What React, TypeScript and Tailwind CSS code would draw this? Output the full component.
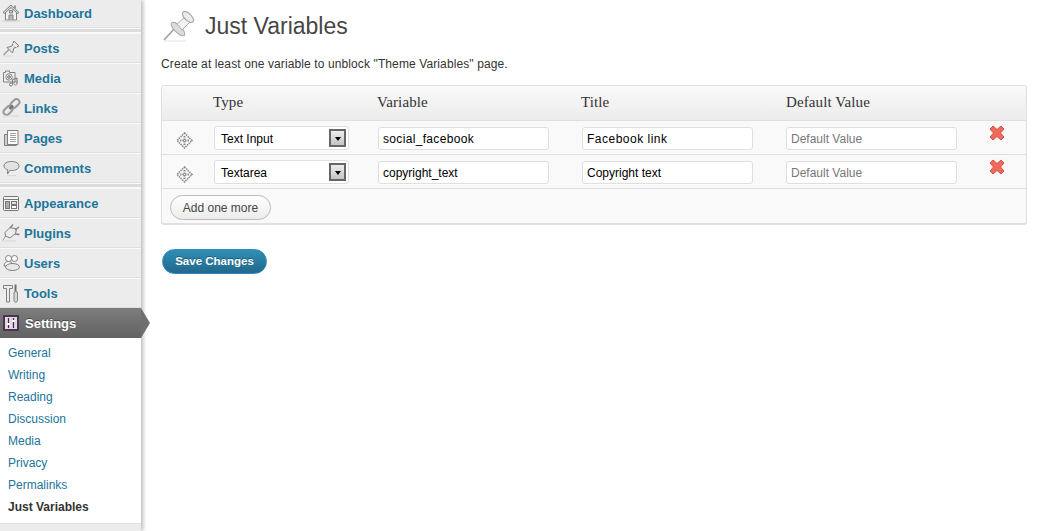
import type { ReactNode } from "react";

const sans = "font-['Liberation_Sans',Arial,sans-serif]";
const serif = "font-['Liberation_Serif',Georgia,serif]";

const Stroke = ({ children }: { children: ReactNode }) => (
  <svg width="20" height="20" viewBox="0 0 20 20" fill="#f4f4f4" stroke="#808080" strokeWidth="1" className="shrink-0">
    {children}
  </svg>
);

const icons: Record<string, ReactNode> = {
  Dashboard: (
    <Stroke>
      <path d="M1 9.500 9 2l8 7.500-1.500 1L9 4.500 2.500 10.500z" fill="#d8d8d8" />
      <path d="M3.500 10v7h11v-7" />
      <path d="M7 17v-5h4v5" fill="#bbb" />
      <path d="M7.500 7.500h3V10h-3z" fill="#ccc" />
      <path d="M13 2.500v3" strokeWidth="1.500" />
      <path d="M0 18h18" stroke="#d0d0d0" />
    </Stroke>
  ),
  Posts: (
    <Stroke>
      <path d="M1.500 17 7 11.500" stroke="#999" strokeWidth="1.200" />
      <path d="M5 9.500l5-1.500 2-5 5 5-5 2-1.500 5z" fill="#e4e4e4" />
      <path d="M11 5l4 4" stroke="#fff" />
      <path d="M1 18h10" stroke="#d8d8d8" />
    </Stroke>
  ),
  Media: (
    <Stroke>
      <path d="M1.500 4.500h2V3h4v1.500h5.500V14H1.500z" fill="#efefef" />
      <circle cx="7" cy="9" r="3.200" fill="#fff" />
      <circle cx="7" cy="9" r="1.400" fill="#bbb" />
      <path d="M10.500 11.500v5M15 10v5.500M10.500 11.500 15 10" strokeWidth="1.200" />
      <circle cx="9" cy="16.500" r="1.500" fill="#fff" />
      <circle cx="13.500" cy="15.500" r="1.500" fill="#fff" />
    </Stroke>
  ),
  Links: (
    <Stroke>
      <rect x="8" y="2.500" width="10" height="6" rx="3" transform="rotate(-45 13 5.500)" fill="none" strokeWidth="2" stroke="#999" />
      <rect x="1" y="9.500" width="10" height="6" rx="3" transform="rotate(-45 6 12.500)" fill="none" strokeWidth="2" stroke="#999" />
      <path d="M7.500 11 11 7.500" strokeWidth="2.500" stroke="#777" />
      <path d="M1 18h16" stroke="#d8d8d8" />
    </Stroke>
  ),
  Pages: (
    <Stroke>
      <path d="M2.500 6.500h3v10h9v1h-12z" fill="#cfcfcf" />
      <path d="M5.500 2.500h10.500v14H5.500z" fill="#fafafa" />
      <path d="M8 5.500h6M8 7.500h6M8 9.500h6M8 11.500h6M8 13.500h6" stroke="#a5a5a5" />
    </Stroke>
  ),
  Comments: (
    <Stroke>
      <path d="M9.500 3.500c4.500 0 7.500 1.800 7.500 4.500s-3 4.500-7.500 4.500c-.6 0-1.200 0-1.700-.1L5.500 16l.2-4.200C3.400 11 2 9.700 2 8c0-2.700 3-4.500 7.500-4.500z" fill="#e2e2e2" />
      <path d="M5 12c-1-.6-2-1.500-2.300-2.500" stroke="#aaa" />
      <path d="M5 17.500h9" stroke="#d8d8d8" />
    </Stroke>
  ),
  Appearance: (
    <Stroke>
      <rect x="1.500" y="3.500" width="15" height="14" rx="1" stroke="#777" />
      <path d="M1.500 6.500h15" stroke="#777" />
      <rect x="3.500" y="8.500" width="4" height="7" fill="#aaa" stroke="#777" />
      <rect x="9.500" y="8.500" width="5" height="3" fill="#ddd" stroke="#777" />
      <rect x="9.500" y="12.500" width="5" height="3" fill="#fff" stroke="#777" />
    </Stroke>
  ),
  Plugins: (
    <Stroke>
      <path d="M.5 17.500c1-1 2-2.500 3-4.500" stroke="#999" />
      <path d="M3.500 13l-.5-3.500L8 4.500l6.500 1.500-1 4.500L8 15z" fill="#ececec" />
      <path d="M8 5l3-3.500M13 7l4-3M13 11l4.500.5" strokeWidth="1.300" />
      <path d="M2 18h12" stroke="#d8d8d8" />
    </Stroke>
  ),
  Users: (
    <Stroke>
      <circle cx="6.500" cy="5.500" r="3" fill="#fff" />
      <circle cx="12.500" cy="5.500" r="3" fill="#fff" />
      <path d="M2 13c0-2.800 2-4.500 4.500-4.500S11 10 11 13z" fill="#fff" />
      <ellipse cx="10.500" cy="14" rx="7" ry="3.500" fill="#e8e8e8" />
    </Stroke>
  ),
  Tools: (
    <Stroke>
      <path d="M1.500 2.500h9v3h-3V19h-3V5.500h-3z" fill="#ececec" />
      <path d="M13.500 1.500v7" strokeWidth="2" stroke="#6e6e6e" />
      <rect x="12" y="8.500" width="3.500" height="10.500" rx="1.500" fill="#d8d8d8" />
    </Stroke>
  ),
};

const groups = [
  ["Dashboard"],
  ["Posts", "Media", "Links", "Pages", "Comments"],
  ["Appearance", "Plugins", "Users", "Tools"],
];

const submenu = ["General", "Writing", "Reading", "Discussion", "Media", "Privacy", "Permalinks"];

function MenuRow({ label, first }: { label: string; first: boolean }) {
  return (
    <div
      className={`flex h-[30px] items-center gap-[2px] border-b border-b-[#dfdfdf] bg-[#ececec] pl-[2px] ${first ? "pt-[1px]" : "border-t border-t-[#f9f9f9]"}`}
    >
      {icons[label]}
      <span className="text-[13px] font-bold leading-none text-[#21759b]">{label}</span>
    </div>
  );
}

function Sidebar() {
  return (
    <aside className="relative h-[531px] w-[141px] shrink-0 overflow-visible bg-[#ececec] shadow-[2px_0_4px_rgba(0,0,0,0.28)]">
      <div className="-mt-[2px]">
        {groups.map((group, i) => (
          <div key={group[0]}>
            {group.map((label) => (
              <MenuRow key={label} label={label} first={label === "Dashboard"} />
            ))}
            {i < groups.length - 1 && <div className="h-[5px] border-y border-y-[#fafafa] bg-[#dcdcdc]" />}
          </div>
        ))}
      </div>
      <div className="relative flex h-[30px] items-center gap-[6px] bg-gradient-to-b from-[#7d7d7d] to-[#626262] pl-[3px] text-[13px] font-bold text-white [text-shadow:0_-1px_0_rgba(0,0,0,0.4)]">
        <svg width="16" height="16" viewBox="0 0 16 16" className="shrink-0">
          <rect x="1" y="1" width="14" height="14" fill="#e6d6e8" stroke="#4a3550" strokeWidth="2" />
          <path d="M5.500 3v10M10.500 3v10" stroke="#3a2a40" strokeWidth="1.200" />
          <path d="M4 9h3M9 6h3" stroke="#fff" strokeWidth="2" />
        </svg>
        <span className="pt-[1px]">Settings</span>
        <div className="absolute -right-[9px] top-0 h-0 w-0 border-y-[15px] border-l-[9px] border-y-transparent border-l-[#6f6f6f]" />
      </div>
      <ul className="bg-white pb-[5px] pl-[8px] pt-[4px] text-[12px] leading-[22px] text-[#21759b]">
        {submenu.map((item) => (
          <li key={item}>{item}</li>
        ))}
        <li className="font-bold text-[#333]">Just Variables</li>
      </ul>
      <div className="h-[13px] border-t border-t-[#e0e0e0] bg-[#ececec]" />
    </aside>
  );
}

function Field({ value, placeholder, tracking = "" }: { value?: string; placeholder?: string; tracking?: string }) {
  return (
    <div
      className={`flex h-[23px] w-[171px] items-center rounded-[3px] border border-[#dfdfdf] bg-white pl-[4px] pt-[1px] text-[12px] ${tracking} ${value ? "text-black" : "text-[#777]"}`}
    >
      {value ?? placeholder}
    </div>
  );
}

function TypeSelect({ value }: { value: string }) {
  return (
    <div className="flex h-[24px] w-[135px] items-center justify-between rounded-[3px] border border-[#dfdfdf] bg-white pl-[6px] pr-[2px] text-[12px] text-black">
      <span className="pt-[1px]">{value}</span>
      <div className="flex h-[18px] w-[17px] items-center justify-center border-2 border-[#666] bg-gradient-to-b from-[#eee] to-[#c4c4c4]">
        <div className="mt-[1px] h-0 w-0 border-x-[3.5px] border-t-[4px] border-x-transparent border-t-black" />
      </div>
    </div>
  );
}

const Mover = () => (
  <svg width="17" height="17" viewBox="0 0 17 17" fill="none" className="shrink-0">
    <path d="M8.500 1 16 8.500 8.500 16 1 8.500z" stroke="#8c8c8c" strokeWidth="1.600" strokeDasharray="1.500 0.800" />
    <path d="M8.500 4v9M4 8.500h9" stroke="#8c8c8c" strokeWidth="2" strokeDasharray="1.500 1" />
  </svg>
);

const Remove = () => (
  <svg width="16" height="16" viewBox="0 0 16 16" className="shrink-0">
    <path
      d="M1 4 4 1 8 4.500 12 1 15 4 11.500 8 15 12 12 15 8 11.500 4 15 1 12 4.500 8z"
      fill="#ee6a5b"
      stroke="#d9503f"
      strokeWidth="1"
    />
  </svg>
);

function Row({
  type,
  variable,
  title,
  variableTracking,
  titleTracking,
}: {
  type: string;
  variable: string;
  title: string;
  variableTracking?: string;
  titleTracking?: string;
}) {
  return (
    <div className="flex h-[34px] items-center border-b border-b-[#dfdfdf] pl-[14px] pt-[1px]">
      <div className="mt-[4px] w-[38px]">
        <Mover />
      </div>
      <TypeSelect value={type} />
      <div className="ml-[29px]">
        <Field value={variable} tracking={variableTracking} />
      </div>
      <div className="ml-[33px]">
        <Field value={title} tracking={titleTracking} />
      </div>
      <div className="ml-[33px]">
        <Field placeholder="Default Value" />
      </div>
      <div className="mb-[10px] ml-[32px]">
        <Remove />
      </div>
    </div>
  );
}

export default function App() {
  return (
    <div className={`${sans} flex h-[531px] w-[1041px] overflow-hidden bg-white`}>
      <Sidebar />
      <main className="flex-1 pl-[20px] pr-[14px]">
        <div className="flex h-[44px] items-center gap-[10px] pt-[8px]">
          <svg width="34" height="34" viewBox="0 0 34 34" className="shrink-0">
            <path d="M3 31 14 19" stroke="#a0a0a0" strokeWidth="1.600" />
            <path d="M3 32h22" stroke="#e2e2e2" strokeWidth="1" />
            <ellipse cx="17" cy="20" rx="9" ry="3.500" transform="rotate(45 17 20)" fill="#dcdcdc" stroke="#a8a8a8" />
            <path d="M16 15 24 8 29 13 21 21z" fill="#f3f3f3" stroke="#b0b0b0" />
            <ellipse cx="27" cy="8" rx="7" ry="3.500" transform="rotate(45 27 8)" fill="#ececec" stroke="#a0a0a0" />
          </svg>
          <h1 className="text-[23px] font-normal leading-none text-[#464646]">Just Variables</h1>
        </div>
        <p className="mt-[12px] text-[12px] leading-[16px] tracking-[0.11px] text-[#333]">
          Create at least one variable to unblock "Theme Variables" page.
        </p>
        <div className="mt-[13px] w-[866px] rounded-[3px] border border-[#dfdfdf] border-b-2 bg-[#f9f9f9]">
          <div
            className={`${serif} flex h-[35px] items-center border-b border-b-[#dfdfdf] bg-gradient-to-b from-[#f9f9f9] to-[#ececec] pb-[2px] pl-[51px] text-[15px] tracking-[0.1px] text-[#333]`}
          >
            <span className="w-[164px]">Type</span>
            <span className="w-[204px]">Variable</span>
            <span className="w-[205px]">Title</span>
            <span>Default Value</span>
          </div>
          <Row type="Text Input" variable="social_facebook" title="Facebook link" variableTracking="tracking-[0.33px]" titleTracking="tracking-[0.5px]" />
          <Row type="Textarea" variable="copyright_text" title="Copyright text" />
          <div className="flex h-[34px] items-start pl-[8px] pt-[6px]">
            <div className="flex h-[25px] w-[101px] items-center justify-center rounded-full border border-[#bbb] bg-gradient-to-b from-white to-[#ececec] pt-[1px] text-[12px] text-[#464646]">
              Add one more
            </div>
          </div>
        </div>
        <button className="ml-[1px] mt-[24px] flex h-[25px] w-[105px] items-center justify-center rounded-full border border-[#298cba] bg-gradient-to-b from-[#2e8fb5] to-[#21688c] pt-[1px] text-[11.5px] font-bold text-white [text-shadow:0_-1px_0_rgba(0,0,0,0.3)]">
          Save Changes
        </button>
      </main>
    </div>
  );
}
